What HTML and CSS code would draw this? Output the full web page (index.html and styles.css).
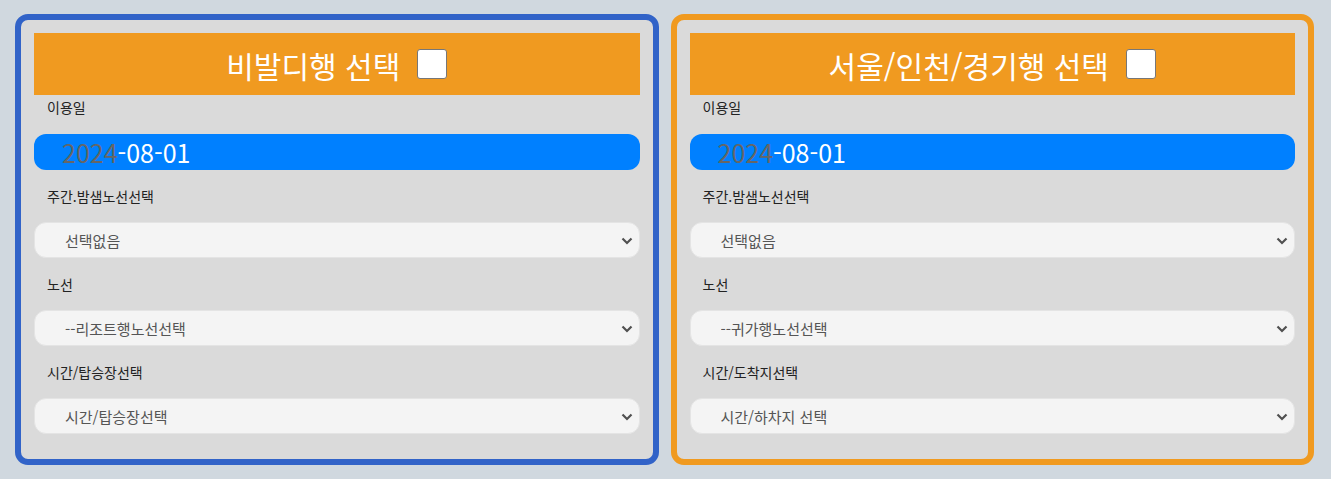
FILE: index.html
```html
<html lang="ko">
  <head>
    <title>노선 선택</title>
    <meta charset="utf-8">
    <link rel="stylesheet" href="styles.css">
  </head>
  <body>
    <div class="boards">
      <div class="board board-go">
        <div class="board-head">
          <span class="board-title">비발디행 선택</span>
          <span class="check"></span>
        </div>
        <div class="field-label">이용일</div>
        <div class="date-box"><span class="year">2024</span>-08-01</div>
        <div class="field-label">주간.밤샘노선선택</div>
        <div class="sel">
          <select><option>선택없음</option></select>
          <svg class="chev" width="12" height="8" viewBox="0 0 12 8"><path d="M1.5 1.5 L6 6 L10.5 1.5" fill="none" stroke="#505050" stroke-width="2.2"/></svg>
        </div>
        <div class="field-label">노선</div>
        <div class="sel">
          <select><option>--리조트행노선선택</option></select>
          <svg class="chev" width="12" height="8" viewBox="0 0 12 8"><path d="M1.5 1.5 L6 6 L10.5 1.5" fill="none" stroke="#505050" stroke-width="2.2"/></svg>
        </div>
        <div class="field-label">시간/탑승장선택</div>
        <div class="sel last">
          <select><option>시간/탑승장선택</option></select>
          <svg class="chev" width="12" height="8" viewBox="0 0 12 8"><path d="M1.5 1.5 L6 6 L10.5 1.5" fill="none" stroke="#505050" stroke-width="2.2"/></svg>
        </div>
      </div>
      <div class="board board-back">
        <div class="board-head">
          <span class="board-title">서울/인천/경기행 선택</span>
          <span class="check"></span>
        </div>
        <div class="field-label">이용일</div>
        <div class="date-box"><span class="year">2024</span>-08-01</div>
        <div class="field-label">주간.밤샘노선선택</div>
        <div class="sel">
          <select><option>선택없음</option></select>
          <svg class="chev" width="12" height="8" viewBox="0 0 12 8"><path d="M1.5 1.5 L6 6 L10.5 1.5" fill="none" stroke="#505050" stroke-width="2.2"/></svg>
        </div>
        <div class="field-label">노선</div>
        <div class="sel">
          <select><option>--귀가행노선선택</option></select>
          <svg class="chev" width="12" height="8" viewBox="0 0 12 8"><path d="M1.5 1.5 L6 6 L10.5 1.5" fill="none" stroke="#505050" stroke-width="2.2"/></svg>
        </div>
        <div class="field-label">시간/도착지선택</div>
        <div class="sel last">
          <select><option>시간/하차지 선택</option></select>
          <svg class="chev" width="12" height="8" viewBox="0 0 12 8"><path d="M1.5 1.5 L6 6 L10.5 1.5" fill="none" stroke="#505050" stroke-width="2.2"/></svg>
        </div>
      </div>
    </div>
  </body>
</html>
```

FILE: styles.css
```css
body {
	margin: 0;
	background-color: #d0d8df;
	font-family: "Noto Sans CJK KR", "Noto Sans", sans-serif;
	color: #222;
}
.boards {
	display: grid;
	grid-template-columns: 1fr 1fr;
	gap: 12px;
	padding: 14px 17px 0 15px;
}
.board {
	background-color: #dadada;
	border: 6px solid #3163c8;
	border-radius: 13px;
	padding: 13px 13px 25px;
}
.board-back { border-color: #f09a20; }
.board-head {
	background-color: #f09a20;
	height: 62px;
	display: flex;
	align-items: center;
	justify-content: center;
	gap: 17px;
}
.board-title {
	color: white;
	font-size: 30px;
	margin-top: 2px;
}
.check {
	width: 28px;
	height: 28px;
	background: white;
	border: 1px solid #777;
	border-radius: 3px;
}
.field-label {
	font-size: 14px;
	line-height: 24px;
	padding-left: 13px;
	margin-bottom: 14px;
}
.board-head + .field-label { margin-bottom: 15px; }
.date-box {
	height: 36px;
	line-height: 36px;
	background-color: #0080ff;
	border-radius: 12px;
	color: white;
	font-size: 25px;
	padding-left: 28px;
	margin-bottom: 14px;
	box-sizing: border-box;
}
.year { color: #666; }
.sel {
	position: relative;
	margin-bottom: 14px;
}
.sel.last { margin-bottom: 0; }
.sel select {
	appearance: none;
	-webkit-appearance: none;
	width: 100%;
	height: 36px;
	background-color: #f4f4f4;
	border: 1px solid #e4e4e4;
	border-radius: 12px;
	padding: 0 30px 0 30px;
	font-family: "Noto Sans CJK KR", "Noto Sans", sans-serif;
	font-size: 15px;
	color: #555;
	outline: none;
}
.chev {
	position: absolute;
	right: 7px;
	top: 15px;
	pointer-events: none;
}
```
